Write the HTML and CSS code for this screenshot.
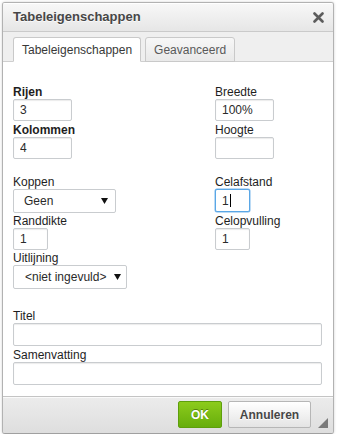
FILE: index.html
```html
<!DOCTYPE html>
<html lang="nl">
<head>
<meta charset="utf-8">
<title>Tabeleigenschappen</title>
<link rel="stylesheet" href="styles.css">
</head>
<body>
<div class="dialog">
  <div class="title">
    <span class="title-text">Tabeleigenschappen</span>
    <svg class="close" width="11" height="11" viewBox="0 0 11 11"><path d="M1.5 1.5L9.5 9.5M9.5 1.5L1.5 9.5" stroke="#5c5c5c" stroke-width="2.6" stroke-linecap="round"/></svg>
  </div>
  <div class="tabs">
    <span class="tab selected">Tabeleigenschappen</span>
    <span class="tab">Geavanceerd</span>
  </div>
  <div class="contents">
    <div class="grid">
      <div class="col">
        <div class="field"><label class="lbl req">Rijen</label><input class="txt w59" value="3"></div>
        <div class="field"><label class="lbl req">Kolommen</label><input class="txt w59" value="4"></div>
      </div>
      <div class="col">
        <div class="field"><label class="lbl">Breedte</label><input class="txt w59" value="100%"></div>
        <div class="field"><label class="lbl">Hoogte</label><input class="txt w59" value=""></div>
      </div>
      <div class="col tight">
        <div class="field"><label class="lbl">Koppen</label><div class="select sel-koppen"><span>Geen</span><svg class="arrow" width="7" height="6" viewBox="0 0 7 6"><path d="M0 0H7L3.5 6Z" fill="#111"/></svg></div></div>
        <div class="field"><label class="lbl">Randdikte</label><input class="txt w35" value="1"></div>
        <div class="field"><label class="lbl">Uitlijning</label><div class="select sel-uit"><span>&lt;niet ingevuld&gt;</span><svg class="arrow" width="7" height="6" viewBox="0 0 7 6"><path d="M0 0H7L3.5 6Z" fill="#111"/></svg></div></div>
      </div>
      <div class="col">
        <div class="field"><label class="lbl">Celafstand</label><div class="txt w35 focused"><span>1</span><span class="caret"></span></div></div>
        <div class="field"><label class="lbl">Celopvulling</label><input class="txt w35" value="1"></div>
      </div>
    </div>
    <div class="full">
      <div class="field"><label class="lbl">Titel</label><input class="txt wide" value=""></div>
      <div class="field"><label class="lbl">Samenvatting</label><input class="txt wide" value=""></div>
    </div>
  </div>
  <div class="footer">
    <button class="btn ok">OK</button>
    <button class="btn cancel">Annuleren</button>
    <svg class="grip" width="10" height="10" viewBox="0 0 10 10"><path d="M10 0V10H0Z" fill="#7a7a7a"/></svg>
  </div>
</div>
</body>
</html>
```

FILE: styles.css
```css
* { box-sizing: border-box; }
html, body { margin: 0; padding: 0; background: #fff; }
body {
  font-family: "Liberation Sans", Arial, Helvetica, sans-serif;
  font-size: 12px;
  color: #222;
}
.dialog {
  margin: 2px 0 0 2px;
  width: 332px;
  height: 432px;
  border: 1px solid #b2b2b2;
  border-bottom-color: #a0a0a0;
  border-radius: 3px;
  box-shadow: 0 0 3px rgba(0,0,0,.18);
  background: #ededed;
  display: flex;
  flex-direction: column;
  overflow: hidden;
}
.title {
  height: 29px;
  display: flex;
  align-items: center;
  justify-content: space-between;
  padding: 0 9px 0 10px;
  background: linear-gradient(#f8f8f8, #e6e6e6);
  border-bottom: 1px solid #cacaca;
  box-shadow: 0 1px 0 #fff inset;
}
.title-text {
  font-size: 13px;
  font-weight: bold;
  color: #474747;
  text-shadow: 0 1px 0 rgba(255,255,255,.75);
  line-height: 28px;
}
.close { display: block; margin-top: 1px; }
.tabs {
  display: flex;
  align-items: flex-end;
  padding: 5px 10px 0;
  height: 30px;
  background: #efefef;
  border-bottom: 1px solid #cfcfcf;
}
.tab {
  height: 25px;
  line-height: 16px;
  padding: 4px 8px 3px;
  margin-right: 4px;
  margin-bottom: -1px;
  border: 1px solid #c9c9c9;
  border-radius: 3px 3px 0 0;
  color: #595959;
  background: linear-gradient(#f7f7f7, #e9e9e9);
}
.tab.selected {
  background: #fff;
  color: #383838;
  border-bottom-color: #fff;
}
.contents {
  flex: 1;
  background: #fff;
  padding: 23px 11px 0 10px;
}
.grid {
  display: grid;
  grid-template-columns: 202px 1fr;
  row-gap: 16px;
}
.col { display: flex; flex-direction: column; gap: 2px; }
.col.tight { gap: 1px; }
.field { display: flex; flex-direction: column; align-items: flex-start; }
.lbl {
  display: block;
  line-height: 14px;
  height: 14px;
  color: #1e1e1e;
}
.lbl.req { font-weight: bold; }
.txt {
  display: block;
  height: 22px;
  margin: 0;
  padding: 0 6px;
  border: 1px solid #c9cccf;
  border-radius: 2px;
  box-shadow: 0 1px 1px rgba(0,0,0,.08) inset;
  background: #fff;
  font-family: "Liberation Sans", Arial, Helvetica, sans-serif;
  font-size: 12px;
  color: #2a2a2a;
  outline: none;
}
.w59 { width: 59px; }
.w35 { width: 35px; }
.wide { width: 309px; height: 23px; }
.focused {
  height: 23px;
  display: flex;
  align-items: center;
  border-color: #5aa7e6;
  box-shadow: 0 0 0 0.5px #7bb8ec;
}
.caret {
  display: block;
  width: 1px;
  height: 13px;
  margin-left: 1px;
  background: #000;
}
.select {
  height: 24px;
  display: flex;
  align-items: center;
  justify-content: space-between;
  border: 1px solid #c9cccf;
  border-radius: 2px;
  background: #fff;
  color: #2a2a2a;
}
.sel-koppen { width: 103px; padding: 0 7px 0 10px; }
.sel-uit { width: 114px; padding: 0 5px 0 11px; }
.arrow { display: block; }
.full {
  margin-top: 20px;
  display: flex;
  flex-direction: column;
  gap: 2px;
}
.footer {
  height: 37px;
  display: flex;
  justify-content: flex-end;
  align-items: flex-end;
  padding: 4px 5px 5px 0;
  border-top: 1px solid #c4c4c4;
  background: linear-gradient(#ececec, #dedede);
  box-shadow: 0 1px 0 #fafafa inset;
}
.btn {
  height: 27px;
  margin: 0 0 0 6px;
  padding: 0;
  border-radius: 2px;
  font-family: "Liberation Sans", Arial, Helvetica, sans-serif;
  font-size: 12px;
  font-weight: bold;
  cursor: pointer;
}
.ok {
  width: 44px;
  color: #fff;
  border: 1px solid #5e9f0c;
  background: linear-gradient(#8ccb1c, #67ae0c);
  text-shadow: 0 -1px 0 #55830c;
}
.cancel {
  width: 83px;
  color: #474747;
  border: 1px solid #b6b6b6;
  background: linear-gradient(#ffffff, #e4e4e4);
  text-shadow: 0 1px 0 #fff;
}
.grip { display: block; margin-left: 7px; }
```
